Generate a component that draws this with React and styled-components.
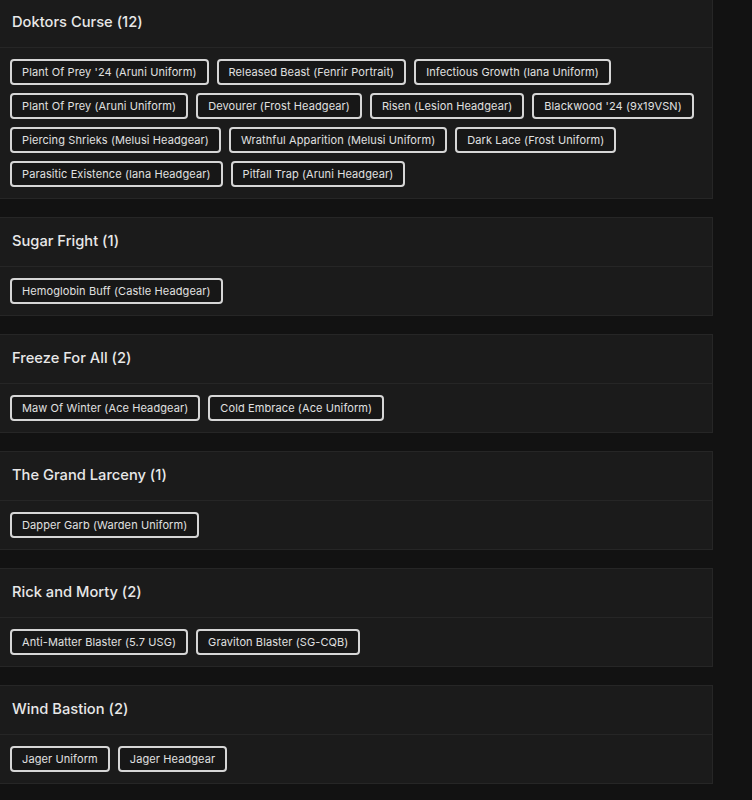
import React from "react";
import styled, { createGlobalStyle } from "styled-components";

const Global = createGlobalStyle`
  html, body { margin: 0; padding: 0; background: #121212; }
  body {
    font-family: "Inter", "Noto Sans", sans-serif;
    color: #e6e6e6;
    font-feature-settings: "calt" 0;
  }
`;

const List = styled.div`
  display: flex;
  flex-direction: column;
  gap: 18px;
  margin-top: -2px;
  width: 713px;
`;

const Card = styled.section`
  background: #1b1b1b;
  border: 1px solid #262626;
  border-left: none;
`;

const Header = styled.h3`
  margin: 0;
  box-sizing: border-box;
  height: 49px;
  display: flex;
  align-items: center;
  padding: 0 12px 2px;
  font-size: 14.7px;
  font-weight: 500;
  color: #e8e8e8;
  border-bottom: 1px solid #262626;
`;

const Body = styled.div`
  display: flex;
  flex-wrap: wrap;
  gap: 8px;
  padding: 11px 10px;
`;

const Chip = styled.span`
  box-sizing: border-box;
  height: 26px;
  display: inline-flex;
  align-items: center;
  padding: 0 10px;
  border: 2px solid #d6d6d6;
  border-radius: 4px;
  background: #171717;
  color: #e0e0e0;
  font-size: 11px;
  letter-spacing: 0.1px;
  white-space: nowrap;
`;

const data = [
  {
    title: "Doktors Curse (12)",
    items: [
      "Plant Of Prey '24 (Aruni Uniform)",
      "Released Beast (Fenrir Portrait)",
      "Infectious Growth (Iana Uniform)",
      "Plant Of Prey (Aruni Uniform)",
      "Devourer (Frost Headgear)",
      "Risen (Lesion Headgear)",
      "Blackwood '24 (9x19VSN)",
      "Piercing Shrieks (Melusi Headgear)",
      "Wrathful Apparition (Melusi Uniform)",
      "Dark Lace (Frost Uniform)",
      "Parasitic Existence (Iana Headgear)",
      "Pitfall Trap (Aruni Headgear)",
    ],
  },
  { title: "Sugar Fright (1)", items: ["Hemoglobin Buff (Castle Headgear)"] },
  {
    title: "Freeze For All (2)",
    items: ["Maw Of Winter (Ace Headgear)", "Cold Embrace (Ace Uniform)"],
  },
  { title: "The Grand Larceny (1)", items: ["Dapper Garb (Warden Uniform)"] },
  {
    title: "Rick and Morty (2)",
    items: ["Anti-Matter Blaster (5.7 USG)", "Graviton Blaster (SG-CQB)"],
  },
  { title: "Wind Bastion (2)", items: ["Jager Uniform", "Jager Headgear"] },
];

export default function App() {
  return (
    <>
      <Global />
      <List>
        {data.map((c) => (
          <Card key={c.title}>
            <Header>{c.title}</Header>
            <Body>
              {c.items.map((i) => (
                <Chip key={i}>{i}</Chip>
              ))}
            </Body>
          </Card>
        ))}
      </List>
    </>
  );
}
